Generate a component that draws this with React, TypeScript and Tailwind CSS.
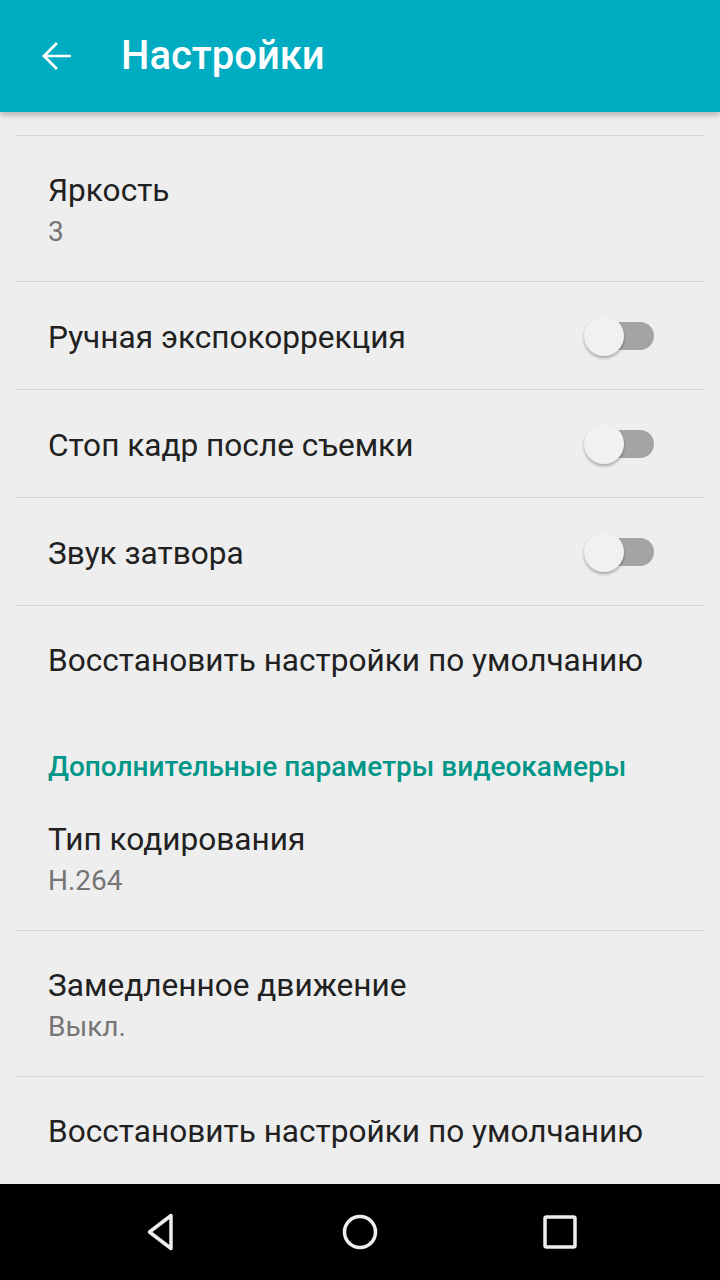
import React from "react";

function Divider() {
  return <div className="mx-4 h-px bg-[#d6d6d6]" />;
}

function Toggle() {
  return (
    <div className="relative h-10 w-[70px]">
      <div className="absolute right-0 top-[6px] h-[28px] w-[68px] rounded-full bg-[#a4a4a4]" />
      <div className="absolute left-0 top-0 h-10 w-10 rounded-full bg-[#f1f1f1] shadow-[0_2px_3px_rgba(0,0,0,0.3)]" />
    </div>
  );
}

function TwoLine({ title, summary }: { title: string; summary: string }) {
  return (
    <div className="flex h-[145px] flex-col justify-center px-12 pt-[4px]">
      <div className="text-[31.6px] leading-[42px] text-[#212121]">{title}</div>
      <div className="text-[28px] leading-[40px] text-[#757575]">{summary}</div>
    </div>
  );
}

function SwitchRow({ title }: { title: string }) {
  return (
    <div className="flex h-[107px] items-center justify-between pl-12 pr-[66px]">
      <div className="pt-[4px] text-[31.6px] leading-[42px] text-[#212121]">{title}</div>
      <Toggle />
    </div>
  );
}

function ResetRow() {
  return (
    <div className="flex h-[110px] items-center px-12 text-[31.6px] leading-[42px] text-[#212121]">
      Восстановить настройки по умолчанию
    </div>
  );
}

export default function App() {
  return (
    <div className="flex h-[1280px] w-[720px] flex-col overflow-hidden bg-[#eeeeee] font-['Roboto',sans-serif]">
      <header className="relative z-10 flex h-[112px] shrink-0 items-center bg-[#00acc1] shadow-[0_3px_6px_rgba(0,0,0,0.25)]">
        <svg className="ml-[39px] h-[34px] w-[34px]" viewBox="0 0 24 24" fill="none" stroke="#ffffff" strokeWidth="1.9">
          <path d="M21.5 12H3.5M12 3.5 3.5 12 12 20.5" strokeLinecap="square" />
        </svg>
        <h1 className="ml-[48px] text-[40px] font-medium leading-none text-white">Настройки</h1>
      </header>

      <main className="flex-1 overflow-hidden">
        <div className="h-[23px]" />
        <Divider />
        <TwoLine title="Яркость" summary="3" />
        <Divider />
        <SwitchRow title="Ручная экспокоррекция" />
        <Divider />
        <SwitchRow title="Стоп кадр после съемки" />
        <Divider />
        <SwitchRow title="Звук затвора" />
        <Divider />
        <ResetRow />
        <div className="px-12 pt-[33px] text-[28px] font-medium leading-[36px] text-[#009688]">
          Дополнительные параметры видеокамеры
        </div>
        <TwoLine title="Тип кодирования" summary="H.264" />
        <Divider />
        <TwoLine title="Замедленное движение" summary="Выкл." />
        <Divider />
        <ResetRow />
      </main>

      <nav className="flex h-[96px] shrink-0 items-center bg-black">
        <div className="flex w-[230px] justify-center pl-[88px]">
          <svg width="36" height="40" viewBox="0 0 36 40" fill="none" stroke="#eeeeee" strokeWidth="3.5" strokeLinejoin="round">
            <path d="M30 3.5V36.5L8.5 20Z" />
          </svg>
        </div>
        <div className="flex flex-1 justify-center">
          <svg width="38" height="38" viewBox="0 0 38 38" fill="none" stroke="#eeeeee" strokeWidth="3.5">
            <circle cx="19" cy="19" r="15.5" />
          </svg>
        </div>
        <div className="flex w-[230px] justify-center pr-[90px]">
          <svg width="34" height="34" viewBox="0 0 34 34" fill="none" stroke="#eeeeee" strokeWidth="3.5">
            <rect x="2" y="2" width="30" height="30" rx="1.5" />
          </svg>
        </div>
      </nav>
    </div>
  );
}
